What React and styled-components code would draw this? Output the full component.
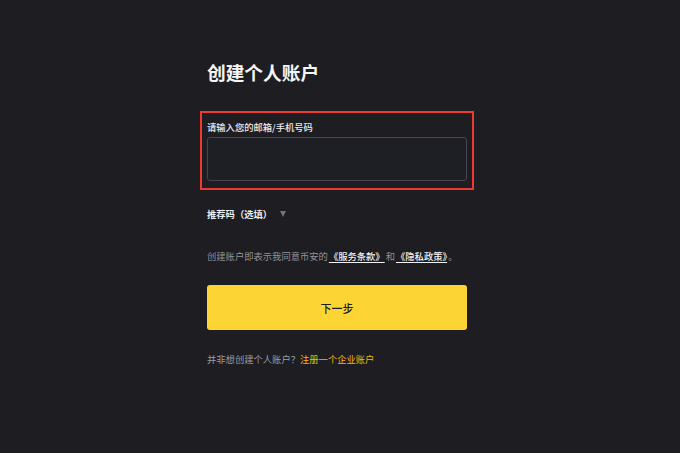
import React from "react";
import styled, { createGlobalStyle } from "styled-components";

const GlobalStyle = createGlobalStyle`
  html, body {
    margin: 0;
    padding: 0;
    background: #1d1d22;
  }
  body {
    font-family: "Noto Sans CJK SC", "Noto Sans", sans-serif;
  }
`;

const Page = styled.div`
  width: 680px;
  height: 453px;
  background: #1d1d22;
  display: flex;
  justify-content: center;
  box-sizing: border-box;
  padding-top: 58px;
  padding-right: 6px;
`;

const Column = styled.div`
  width: 260px;
  display: flex;
  flex-direction: column;
`;

const Title = styled.h1`
  margin: 0;
  font-size: 18.7px;
  line-height: 28px;
  font-weight: 700;
  color: #f5f5f5;
`;

const Highlight = styled.div`
  margin: 25px -7px 0;
  padding: 6px 5px 7px;
  border: 2px solid #ee3a32;
  display: flex;
  flex-direction: column;
`;

const Label = styled.label`
  font-size: 9.3px;
  line-height: 16px;
  font-weight: 500;
  color: #e9eaec;
  margin-bottom: 2px;
`;

const Input = styled.input`
  height: 44px;
  box-sizing: border-box;
  border: 1px solid #46464e;
  border-radius: 3px;
  background: #1e1f25;
  color: #eaecef;
  outline: none;
  padding: 0 10px;
`;

const Referral = styled.div`
  margin-top: 14px;
  display: flex;
  align-items: center;
  gap: 8px;
  font-size: 9.3px;
  line-height: 20px;
  font-weight: 700;
  color: #eaecef;
`;

const Caret = styled.span`
  width: 0;
  height: 0;
  border-left: 3.5px solid transparent;
  border-right: 3.5px solid transparent;
  border-top: 6px solid #6f7580;
`;

const Terms = styled.p`
  margin: 22px 0 0;
  font-size: 9.3px;
  line-height: 20px;
  color: #8f939b;
  white-space: nowrap;
`;

const TermLink = styled.a`
  color: #f2f2f2;
  font-weight: 500;
  text-decoration: underline;
  text-underline-offset: 2px;
  margin: 0 1px;
`;

const NextButton = styled.button`
  margin-top: 19px;
  height: 45px;
  border: none;
  border-radius: 3px;
  background: #fcd535;
  color: #1e2026;
  font-family: inherit;
  font-size: 11px;
  font-weight: 500;
  cursor: pointer;
`;

const Footer = styled.p`
  margin: 19px 0 0;
  font-size: 9.3px;
  line-height: 20px;
  color: #9a9ea6;
`;

const Accent = styled.a`
  color: #f0b90b;
  text-decoration: none;
`;

export default function App() {
  return (
    <>
      <GlobalStyle />
      <Page>
        <Column>
          <Title>创建个人账户</Title>
          <Highlight>
            <Label htmlFor="account">请输入您的邮箱/手机号码</Label>
            <Input id="account" type="text" />
          </Highlight>
          <Referral>
            推荐码（选填）
            <Caret />
          </Referral>
          <Terms>
            创建账户即表示我同意币安的
            <TermLink href="#">《服务条款》</TermLink>和
            <TermLink href="#">《隐私政策》</TermLink>。
          </Terms>
          <NextButton>下一步</NextButton>
          <Footer>
            并非想创建个人账户？<Accent href="#">注册一个企业账户</Accent>
          </Footer>
        </Column>
      </Page>
    </>
  );
}
